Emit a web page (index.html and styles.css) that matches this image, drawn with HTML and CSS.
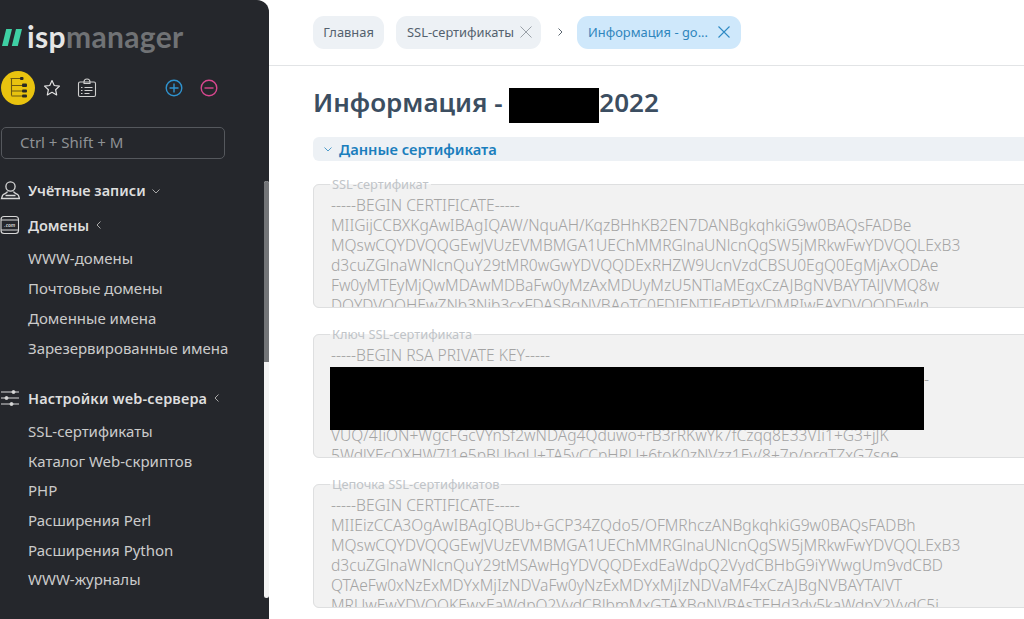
FILE: index.html
```html
<!DOCTYPE html>
<html lang="ru">
<head>
<meta charset="utf-8">
<title>ispmanager</title>
<link rel="stylesheet" href="styles.css">
</head>
<body>
<div class="app">
  <aside class="sidebar">
    <div class="logo">
      <svg class="logo-mark" viewBox="0 0 20 17" width="20" height="17"><path d="M4.200 0H10L5.800 17H0zM14 0H20L15.800 17H9.800z" fill="#3fd0a4"/></svg>
      <span class="logo-text"><b>isp</b><span>manager</span></span>
    </div>
    <div class="toolbar">
      <span class="tool-active">
        <svg viewBox="0 0 34 34" width="34" height="34" fill="none" stroke="#6d5a12" stroke-width="1.100"><path d="M9.500 7.500h10M10.500 7.500V24.500M10.500 14.500h10.500M10.500 20h10.500M10.500 25h10.500"/><rect x="19" y="6" width="3.500" height="3" rx="1" fill="#2a2a25" stroke="none"/><rect x="21" y="12.500" width="5" height="3.500" rx="1" fill="#2a2a25" stroke="none"/><rect x="21" y="18.500" width="5" height="3" rx="1" fill="#2a2a25" stroke="none"/><rect x="21" y="23.500" width="5" height="3" rx="1" fill="#2a2a25" stroke="none"/></svg>
      </span>
      <svg class="tool" viewBox="0 0 20 20" width="18" height="18" fill="none" stroke="#e4e4e4" stroke-width="1.300" stroke-linejoin="round"><path d="M10 1.800l2.500 5.400 5.800.7-4.300 4 1.200 5.800-5.200-2.900-5.200 2.900 1.200-5.800-4.300-4 5.800-.7z"/></svg>
      <svg class="tool tool-card" viewBox="0 0 20 20" width="20" height="20" fill="none" stroke="#d0d0d0" stroke-width="1.100"><rect x="1.500" y="4" width="17" height="14.500" rx="1.500"/><path d="M7 4c0-4 6-4 6 0v1.500H7zM4 9.500h1.500M4 12.500h1.500M4 15.500h1.500M7.500 9.500h8M7.500 12.500h8M7.500 15.500h5"/></svg>
      <svg class="tool tool-plus" viewBox="0 0 18 18" width="18" height="18" fill="none" stroke="#2f93cf" stroke-width="1.400"><circle cx="9" cy="9" r="7.800"/><path d="M9 4.500v9M4.500 9h9"/></svg>
      <svg class="tool tool-minus" viewBox="0 0 18 18" width="18" height="18" fill="none" stroke="#d9478f" stroke-width="1.400"><circle cx="9" cy="9" r="7.800"/><path d="M4.500 9h9"/></svg>
    </div>
    <div class="search">Ctrl + Shift + M</div>
    <nav class="menu">
      <div class="group-title">
        <svg class="group-icon" viewBox="0 0 20 20" width="20" height="20" fill="none" stroke="#d8d8d8" stroke-width="1.300"><circle cx="10.500" cy="6.500" r="4.600"/><path d="M7.500 11.500C7 13.500 3.500 13.500 2.500 15.500l-1 3h18l-1-3c-1-2-4.500-2-5-4M5.500 15.500h10"/></svg>
        <span>Учётные записи</span>
        <svg class="chev-down" viewBox="0 0 8 5" width="8" height="5" fill="none" stroke="#a8a8a8" stroke-width="1"><path d="M.5.500L4 4 7.500.500"/></svg>
      </div>
      <div class="group-title gt-domains">
        <svg class="group-icon" viewBox="0 0 20 20" width="20" height="20" fill="none" stroke="#d8d8d8" stroke-width="1.100"><rect x="1" y="1.500" width="17.500" height="17" rx="3"/><path d="M1 5h17.500M1 15h17.500"/><text x="9.800" y="11.800" text-anchor="middle" class="com">.com</text></svg>
        <span>Домены</span>
        <svg class="chev-left" viewBox="0 0 5 8" width="5" height="8" fill="none" stroke="#a8a8a8" stroke-width="1"><path d="M4.500.500L1 4l3.500 3.500"/></svg>
      </div>
      <ul class="sub">
        <li>WWW-домены</li>
        <li>Почтовые домены</li>
        <li>Доменные имена</li>
        <li>Зарезервированные имена</li>
      </ul>
      <div class="group-title gt-web">
        <svg class="group-icon" viewBox="0 0 20 20" width="20" height="20" fill="#d8d8d8" stroke="#d8d8d8" stroke-width="1"><path d="M1 4h18M1 10h18M1 16h18" fill="none"/><circle cx="13.500" cy="4" r="1.500"/><circle cx="6.500" cy="10" r="1.500"/><circle cx="11.500" cy="16" r="1.500"/></svg>
        <span>Настройки web-сервера</span>
        <svg class="chev-left" viewBox="0 0 5 8" width="5" height="8" fill="none" stroke="#a8a8a8" stroke-width="1"><path d="M4.500.500L1 4l3.500 3.500"/></svg>
      </div>
      <ul class="sub sub-web">
        <li>SSL-сертификаты</li>
        <li>Каталог Web-скриптов</li>
        <li>PHP</li>
        <li>Расширения Perl</li>
        <li>Расширения Python</li>
        <li>WWW-журналы</li>
      </ul>
    </nav>
    <div class="scroll-track"><div class="scroll-thumb"></div></div>
  </aside>
  <main class="content">
    <header class="tabs">
      <div class="tab tab-home">Главная</div>
      <div class="tab tab-ssl">SSL-сертификаты
        <svg class="x" viewBox="0 0 12 12" width="12" height="12" stroke="#9aa1a8" stroke-width="1" fill="none"><path d="M.5.500l11 11M11.500.500l-11 11"/></svg>
      </div>
      <svg class="tab-arrow" viewBox="0 0 5 8" width="5" height="8" fill="none" stroke="#5b6670" stroke-width="1"><path d="M.5.500L4 4 .5 7.500"/></svg>
      <div class="tab tab-active">Информация - go...
        <svg class="x" viewBox="0 0 12 12" width="12" height="12" stroke="#2f8ac4" stroke-width="1.100" fill="none"><path d="M.5.500l11 11M11.500.500l-11 11"/></svg>
      </div>
    </header>
    <div class="body">
      <h1 class="title">Информация - <span class="redact-title"></span>2022</h1>
      <div class="section">
        <svg class="section-chev" viewBox="0 0 8 5" width="8" height="5" fill="none" stroke="#4f9ccb" stroke-width="1"><path d="M.5.500L4 4 7.500.500"/></svg>
        <span>Данные сертификата</span>
      </div>
      <fieldset class="field">
        <legend>SSL-сертификат</legend>
        <div class="text">
          <div>-----BEGIN CERTIFICATE-----</div>
          <div>MIIGijCCBXKgAwIBAgIQAW/NquAH/KqzBHhKB2EN7DANBgkqhkiG9w0BAQsFADBe</div>
          <div>MQswCQYDVQQGEwJVUzEVMBMGA1UEChMMRGlnaUNlcnQgSW5jMRkwFwYDVQQLExB3</div>
          <div>d3cuZGlnaWNlcnQuY29tMR0wGwYDVQQDExRHZW9UcnVzdCBSU0EgQ0EgMjAxODAe</div>
          <div>Fw0yMTEyMjQwMDAwMDBaFw0yMzAxMDUyMzU5NTlaMEgxCzAJBgNVBAYTAlJVMQ8w</div>
          <div>DQYDVQQHEwZNb3Nib3cxFDASBgNVBAoTC0FDIENTIEdPTkVDMRIwEAYDVQQDEwln</div>
        </div>
      </fieldset>
      <fieldset class="field">
        <legend>Ключ SSL-сертификата</legend>
        <div class="text">
          <div>-----BEGIN RSA PRIVATE KEY-----</div>
          <div class="hidden-line">-</div>
          <div class="hidden-line"></div>
          <div class="hidden-line"></div>
          <div>VUQ/4IiON+WgcFGcVYnSf2wNDAg4Qduwo+rB3rRKwYk7fCzqq8E33VIi1+G3+jJK</div>
          <div>5WdlYEcOXHW7I1e5pBUbgU+TA5vCCpHRU+6toK0zNVzz1Ev/8+7p/prqTZxG7sqe</div>
        </div>
        <div class="redact-key"></div>
      </fieldset>
      <fieldset class="field">
        <legend>Цепочка SSL-сертификатов</legend>
        <div class="text">
          <div>-----BEGIN CERTIFICATE-----</div>
          <div>MIIEizCCA3OgAwIBAgIQBUb+GCP34ZQdo5/OFMRhczANBgkqhkiG9w0BAQsFADBh</div>
          <div>MQswCQYDVQQGEwJVUzEVMBMGA1UEChMMRGlnaUNlcnQgSW5jMRkwFwYDVQQLExB3</div>
          <div>d3cuZGlnaWNlcnQuY29tMSAwHgYDVQQDExdEaWdpQ2VydCBHbG9iYWwgUm9vdCBD</div>
          <div>QTAeFw0xNzExMDYxMjIzNDVaFw0yNzExMDYxMjIzNDVaMF4xCzAJBgNVBAYTAlVT</div>
          <div>MRUwEwYDVQQKEwxEaWdpQ2VydCBJbmMxGTAXBgNVBAsTEHd3dy5kaWdpY2VydC5j</div>
        </div>
      </fieldset>
    </div>
  </main>
</div>
</body>
</html>
```
FILE: styles.css
```css
html, body { margin: 0; padding: 0; height: 100%; overflow: hidden; background: #fff; }
body { font-family: "Noto Sans", sans-serif; }
.app { display: flex; width: 1024px; height: 619px; overflow: hidden; }

.sidebar { position: relative; flex: 0 0 269px; height: 619px; box-sizing: border-box; background: #25272c; border-top-right-radius: 12px; color: #cfcfcf; overflow: hidden; }
.logo { display: flex; align-items: center; gap: 5px; height: 28px; margin: 22px 0 0 2px; }
.logo-mark { display: block; margin-top: 2px; }
.logo-text { font-family: "Lato", sans-serif; font-size: 30px; line-height: 28px; letter-spacing: .35px; color: #707275; font-weight: 700; }
.logo-text b { color: #e6e6e6; font-weight: 700; }

.toolbar { display: flex; align-items: center; height: 34px; margin: 21px 0 0 1px; }
.tool-active { display: flex; align-items: center; justify-content: center; width: 34px; height: 34px; border-radius: 50%; background: #e9c30f; }
.tool { display: block; }
.toolbar .tool:nth-child(2) { margin-left: 8px; }
.tool-card { margin-left: 16px; }
.tool-plus { margin-left: 68px; }
.tool-minus { margin-left: 17px; }

.search { box-sizing: border-box; width: 224px; height: 32px; margin: 22px 0 0 1px; padding-left: 18px; border: 1px solid #55585d; border-radius: 5px; font-size: 15px; line-height: 29px; color: #8f9295; }

.menu { margin-top: 16px; }
.group-title { display: flex; align-items: center; height: 30px; font-size: 14.500px; font-weight: 600; color: #dedede; }
.gt-domains { margin-top: 5px; }
.gt-web { margin-top: 20px; }
.gt-web span { letter-spacing: .14px; }
.group-icon { flex: none; width: 20px; margin: 0 8px 0 0; }
.chev-down { margin-left: 6px; margin-top: 2px; }
.chev-left { margin-left: 7px; }
.com { font-size: 5px; fill: #d8d8d8; stroke: none; font-family: "Noto Sans", sans-serif; font-style: italic; }
.sub { list-style: none; margin: 3px 0 0; padding: 0 0 0 28px; }
.sub li { height: 30px; font-size: 15px; line-height: 30px; color: #cbcbcb; white-space: nowrap; }
.sub-web li { height: 29.700px; }

.scroll-track { position: absolute; left: 264px; top: 181px; width: 5px; height: 417px; background: #f4f4f4; border-radius: 3px; }
.scroll-thumb { width: 100%; height: 181px; background: #737578; border-radius: 3px 3px 0 0; }

.content { flex: 1; min-width: 0; overflow: hidden; }
.tabs { display: flex; align-items: center; box-sizing: border-box; height: 66px; padding: 0 0 1px 44px; border-bottom: 1px solid #e2e4e6; }
.tab { display: flex; align-items: center; box-sizing: border-box; height: 33px; border-radius: 11px; background: #edf1f5; font-size: 12.900px; color: #54616e; white-space: nowrap; }
.tab-home { width: 71px; justify-content: center; }
.tab-ssl { width: 145px; margin-left: 12px; padding-left: 11px; }
.tab-ssl .x { margin-left: 6px; }
.tab-arrow { flex: none; margin: 0 14px 0 17px; }
.tab-active { width: 164px; padding-left: 11px; background: #cfe8fb; color: #2f86bd; }
.tab-active .x { margin-left: 10px; }

.body { padding-left: 44px; }
.title { display: flex; align-items: flex-start; height: 34px; margin: 22px 0 0; font-size: 26px; line-height: 28px; font-weight: 600; letter-spacing: 0; color: #3c4e61; white-space: pre; }
.redact-title { display: block; width: 90px; height: 35px; background: #000; }
.section { display: flex; align-items: center; height: 24px; margin-top: 15px; padding-left: 11px; border-radius: 6px 0 0 6px; background: #edf1f5; font-size: 14.700px; font-weight: 600; color: #1a7ebd; }
.section-chev { margin-right: 7px; }

.field { position: relative; box-sizing: border-box; width: 760px; height: 132px; margin: 15px 0 18px; padding: 0 0 0 17px; border: 1px solid #dedfe0; border-radius: 6px; background: #f2f2f2; overflow: hidden; min-width: 0; }
.field legend { padding: 0 2px; margin-left: -1px; font-size: 12.800px; line-height: 16px; color: #c0c4c8; }
.text { padding-top: 3px; font-size: 15.600px; font-weight: 300; line-height: 20px; color: #a4a4a4; white-space: nowrap; }
.text div { height: 20px; }
.hidden-line { padding-left: 593px; line-height: 28px; }
.redact-key { position: absolute; left: 16px; top: 25px; width: 594px; height: 63px; background: #000; }
```
